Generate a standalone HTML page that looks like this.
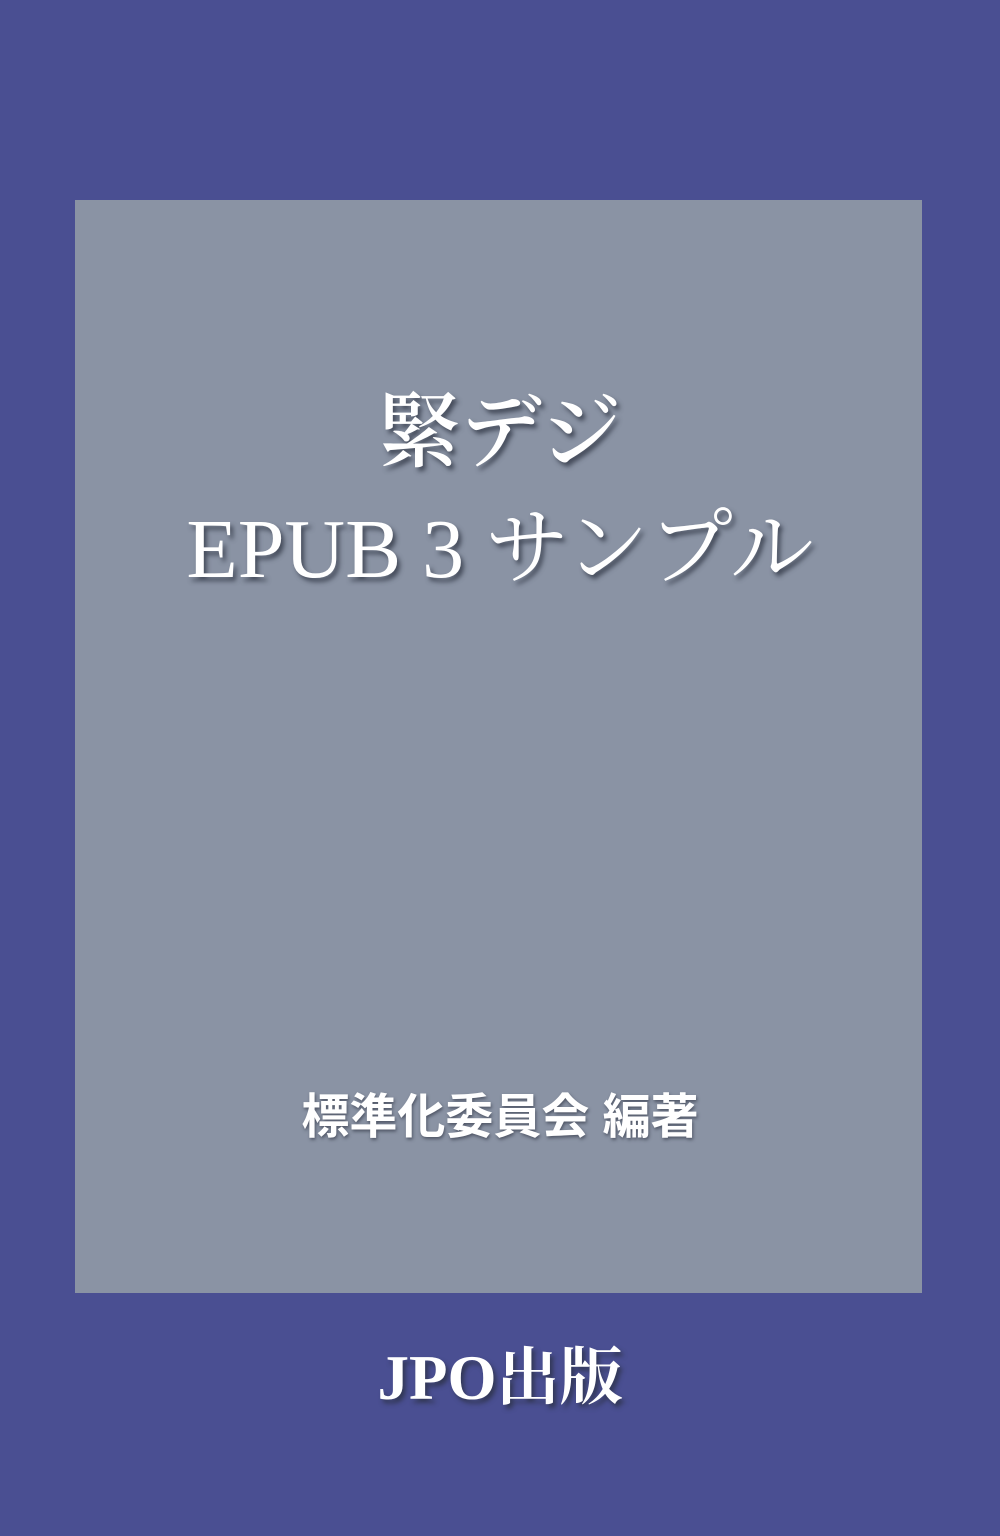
<!DOCTYPE html>
<html><head><meta charset="utf-8"><style>
html,body{margin:0;padding:0}
body{width:1000px;height:1536px;background:#4a4f92;position:relative;overflow:hidden;font-family:"Liberation Serif","Noto Serif CJK JP",serif}
.panel{position:absolute;left:75px;top:200px;width:847px;height:1093px;background:#8a93a4}
.t{position:absolute;left:0;width:1000px;text-align:center;color:#fff;white-space:nowrap;text-shadow:3px 4px 5px rgba(40,45,60,.7)}
#t1{top:376px;font-size:82px;line-height:100px;font-family:"Noto Serif CJK JP","Liberation Serif",serif;font-weight:600}
#t2{top:500px;font-size:84px;line-height:100px;font-family:"Liberation Serif","Noto Serif CJK JP",serif}
#au{top:1088px;font-size:48px;line-height:60px;font-weight:bold;font-family:"Liberation Sans","Noto Sans CJK JP",sans-serif;text-shadow:1px 2px 3px rgba(40,45,60,.6)}
#pub{top:1338px;font-size:63px;line-height:80px;font-weight:bold;font-family:"Liberation Serif","Noto Serif CJK JP",serif}
</style></head><body>
<div class="panel"></div>
<div class="t" id="t1">緊デジ</div>
<div class="t" id="t2">EPUB 3 サンプル</div>
<div class="t" id="au">標準化委員会 編著</div>
<div class="t" id="pub">JPO出版</div>
</body></html>
